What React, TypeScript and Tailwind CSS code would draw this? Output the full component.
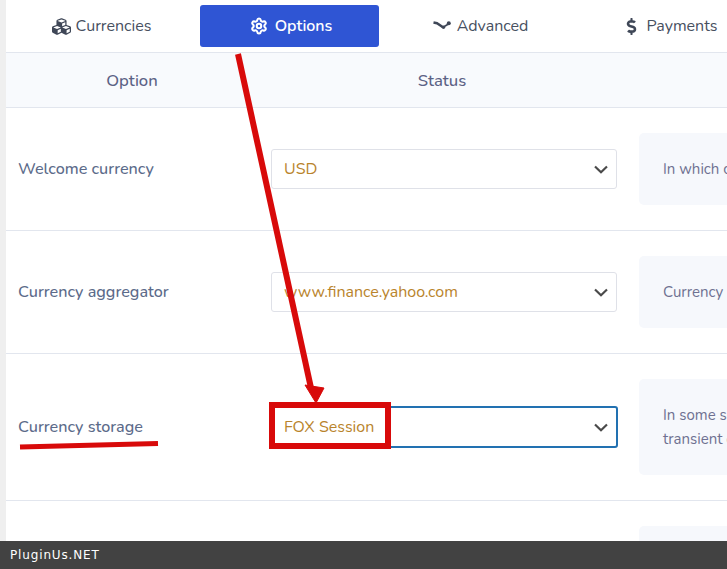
import React from 'react';
import { FaCubes, FaDollarSign } from 'react-icons/fa';
import { Settings } from 'lucide-react';

const bodyFont = "font-['Nunito','Open_Sans','Noto_Sans',sans-serif]";

const rows = [
  { label: 'Welcome currency', value: 'USD', note: ['In which currency the shop is shown to a new visitor'], focused: false },
  { label: 'Currency aggregator', value: 'www.finance.yahoo.com', note: ['Currency aggregators are used to get the rates'], focused: false },
  { label: 'Currency storage', value: 'FOX Session', note: ['In some servers there is troubles with sessions, use', 'transient data or cookies to store the currency'], focused: true },
];

const Chevron: React.FC = () => (
  <svg width="16" height="16" viewBox="0 0 16 16" fill="none" className="text-[#4a4a4a]">
    <path d="M2 5.5 8 11.2 14 5.5" stroke="currentColor" strokeWidth="2.2" />
  </svg>
);

const WrenchLine: React.FC = () => (
  <svg width="19" height="12" viewBox="0 0 19 12" fill="none" className="text-[#3f4757]">
    <path d="M0.5 2.5 4 3.2 10 7.2" stroke="currentColor" strokeWidth="2.4" />
    <path d="M10 7.2 15.5 4" stroke="currentColor" strokeWidth="1.6" />
    <circle cx="15.8" cy="3.2" r="2" fill="currentColor" />
    <circle cx="10.5" cy="7.2" r="1.7" fill="currentColor" />
  </svg>
);

const Tab: React.FC<{ active?: boolean; icon: React.ReactNode; label: string; className?: string }> = ({ active, icon, label, className }) => (
  <div
    className={`flex h-[42px] w-[179px] shrink-0 items-center justify-center rounded-[3px] text-[16px] ${
      active ? 'bg-[#2f55d4] font-semibold text-white' : 'text-[#47505f]'
    } ${className ?? ''}`}
  >
    {icon}
    <span>{label}</span>
  </div>
);

const App: React.FC = () => {
  return (
    <div className={`relative flex h-[569px] w-[727px] overflow-hidden bg-white ${bodyFont}`}>
      {/* Left gutter */}
      <div className="w-[6px] shrink-0 bg-[#efefef]" />

      <div className="min-w-0 flex-1">
        {/* Tabs */}
        <div className="flex h-[53px] gap-[10px] border-b border-[#e2e6ee] pt-[5px] pl-[5px]">
          <Tab icon={<FaCubes size={19} className="text-[#3f4757]" />} label="Currencies" className="gap-[5px] pl-[2px]" />
          <Tab active icon={<Settings size={18} strokeWidth={2.7} />} label="Options" className="gap-[7px] pl-[3px]" />
          <Tab icon={<WrenchLine />} label="Advanced" className="gap-[5px] pl-[4px]" />
          <Tab icon={<FaDollarSign size={17} className="text-[#3f4757]" />} label="Payments" className="gap-[7px] pl-[5px]" />
        </div>

        {/* Table header */}
        <div className="flex h-[55px] items-center border-b border-[#e2e6ee] bg-[#f8fafd] pt-px text-[16.7px] font-medium text-[#5c6285]">
          <div className="w-[252px] text-center">Option</div>
          <div className="w-[368px] text-center">Status</div>
        </div>

        {/* Rows */}
        {rows.map((row) => (
          <div key={row.label} className="flex items-center border-b border-[#e2e6ee] py-[25px]">
            <div className="w-[265px] shrink-0 pl-[12px] text-[16.2px] font-medium text-[#5c6b8a]">{row.label}</div>
            <div
              className={`flex shrink-0 items-center justify-between rounded-[3px] bg-white text-[16px] text-[#b9842c] ${
                row.focused ? 'h-[42px] w-[347px] border-2 border-[#2271b1] pr-[7px] pl-[11px]' : 'h-[40px] w-[346px] border border-[#dfe1e8] pr-[7px] pl-[12px]'
              }`}
            >
              <span>{row.value}</span>
              <Chevron />
            </div>
            <div className={`w-[300px] shrink-0 rounded-[5px] bg-[#f6f8fc] px-[24px] py-[24px] text-[15px] leading-[24px] whitespace-nowrap text-[#6e7191] ${row.focused ? 'ml-[21px]' : 'ml-[22px]'}`}>
              {row.note.map((line) => (
                <div key={line}>{line}</div>
              ))}
            </div>
          </div>
        ))}

        {/* Next row, cut off by the footer */}
        <div className="py-[25px] pl-[633px]">
          <div className="h-[72px] w-[300px] rounded-[5px] bg-[#f6f8fc]" />
        </div>
      </div>

      {/* Annotations drawn over the page */}
      <svg className="absolute inset-0" width="727" height="569" viewBox="0 0 727 569" fill="none">
        <path d="M238 54 311 388" stroke="#d80a0a" strokeWidth="6" />
        <path d="M305 385 324 388 316 403Z" fill="#d80a0a" stroke="#d80a0a" strokeWidth="1" />
        <rect x="272" y="405" width="116" height="41" stroke="#d80a0a" strokeWidth="6" />
        <path d="M20 447 158 443.5" stroke="#d80a0a" strokeWidth="5" />
      </svg>

      {/* Footer bar */}
      <div className="absolute inset-x-0 bottom-0 flex h-[28px] items-center bg-[#424242] pl-[10px] font-['DejaVu_Sans',sans-serif] text-[12px] font-normal tracking-[0.85px] text-white">
        PluginUs.NET
      </div>
    </div>
  );
};

export default App;
